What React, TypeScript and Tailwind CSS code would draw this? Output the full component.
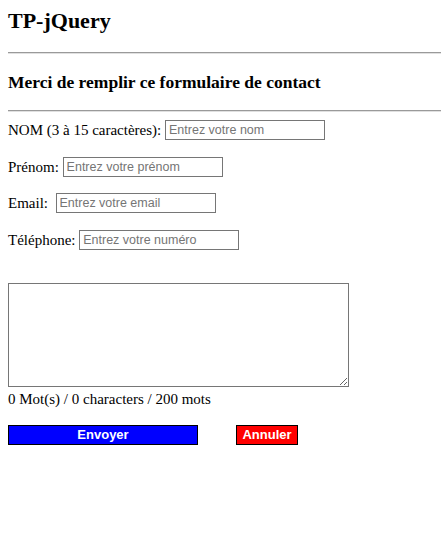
import React from "react";

const serif = { fontFamily: '"Liberation Serif", "Times New Roman", serif' };

function Row({ label, placeholder, top }: { label: string; placeholder: string; top: string }) {
  return (
    <div className={`flex items-center h-[20px] ${top}`}>
      <span className="text-[15px] leading-[20px] whitespace-pre text-black">{label}</span>
      <input
        type="text"
        placeholder={placeholder}
        className="w-[160px] h-[20px] border border-[#767676] px-[3px] text-[12.5px] leading-[18px] outline-none placeholder:text-[#757575] bg-white"
        style={{ fontFamily: '"Liberation Sans", Arial, sans-serif' }}
      />
    </div>
  );
}

export default function App() {
  return (
    <div className="w-[441px] min-h-[546px] bg-white pt-[8px] pl-[8px] text-black" style={serif}>
      <h1 className="text-[22px] leading-[25px] font-bold">TP-jQuery</h1>
      <div className="mt-[19px] h-[2px] border-t border-[#9a9a9a] border-b border-b-[#e0e0e0]" />
      <h3 className="mt-[18px] text-[17.5px] leading-[20px] font-bold">Merci de remplir ce formulaire de contact</h3>
      <div className="mt-[18px] h-[2px] border-t border-[#9a9a9a] border-b border-b-[#e0e0e0]" />
      <Row top="mt-[8px]" label={"NOM (3 à 15 caractères):\u00a0"} placeholder="Entrez votre nom" />
      <Row top="mt-[17px]" label={"Prénom:\u00a0"} placeholder="Entrez votre prénom" />
      <Row top="mt-[16px]" label={"Email:\u00a0\u00a0"} placeholder="Entrez votre email" />
      <Row top="mt-[17px]" label={"Téléphone:\u00a0"} placeholder="Entrez votre numéro" />
      <textarea className="block mt-[33px] w-[341px] h-[104px] border border-[#767676] bg-white outline-none resize" />
      <div className="mt-[4px] text-[15px] leading-[17px]">0 Mot(s) / 0 characters / 200 mots</div>
      <div className="flex mt-[17px] gap-[38px]" style={{ fontFamily: '"Liberation Sans", Arial, sans-serif' }}>
        <button className="w-[190px] h-[20px] bg-[#0000ff] border border-black text-white font-bold text-[13px] leading-[18px]">
          Envoyer
        </button>
        <button className="w-[62px] h-[20px] bg-[#ff0000] border border-black text-white font-bold text-[13px] leading-[18px]">
          Annuler
        </button>
      </div>
    </div>
  );
}
